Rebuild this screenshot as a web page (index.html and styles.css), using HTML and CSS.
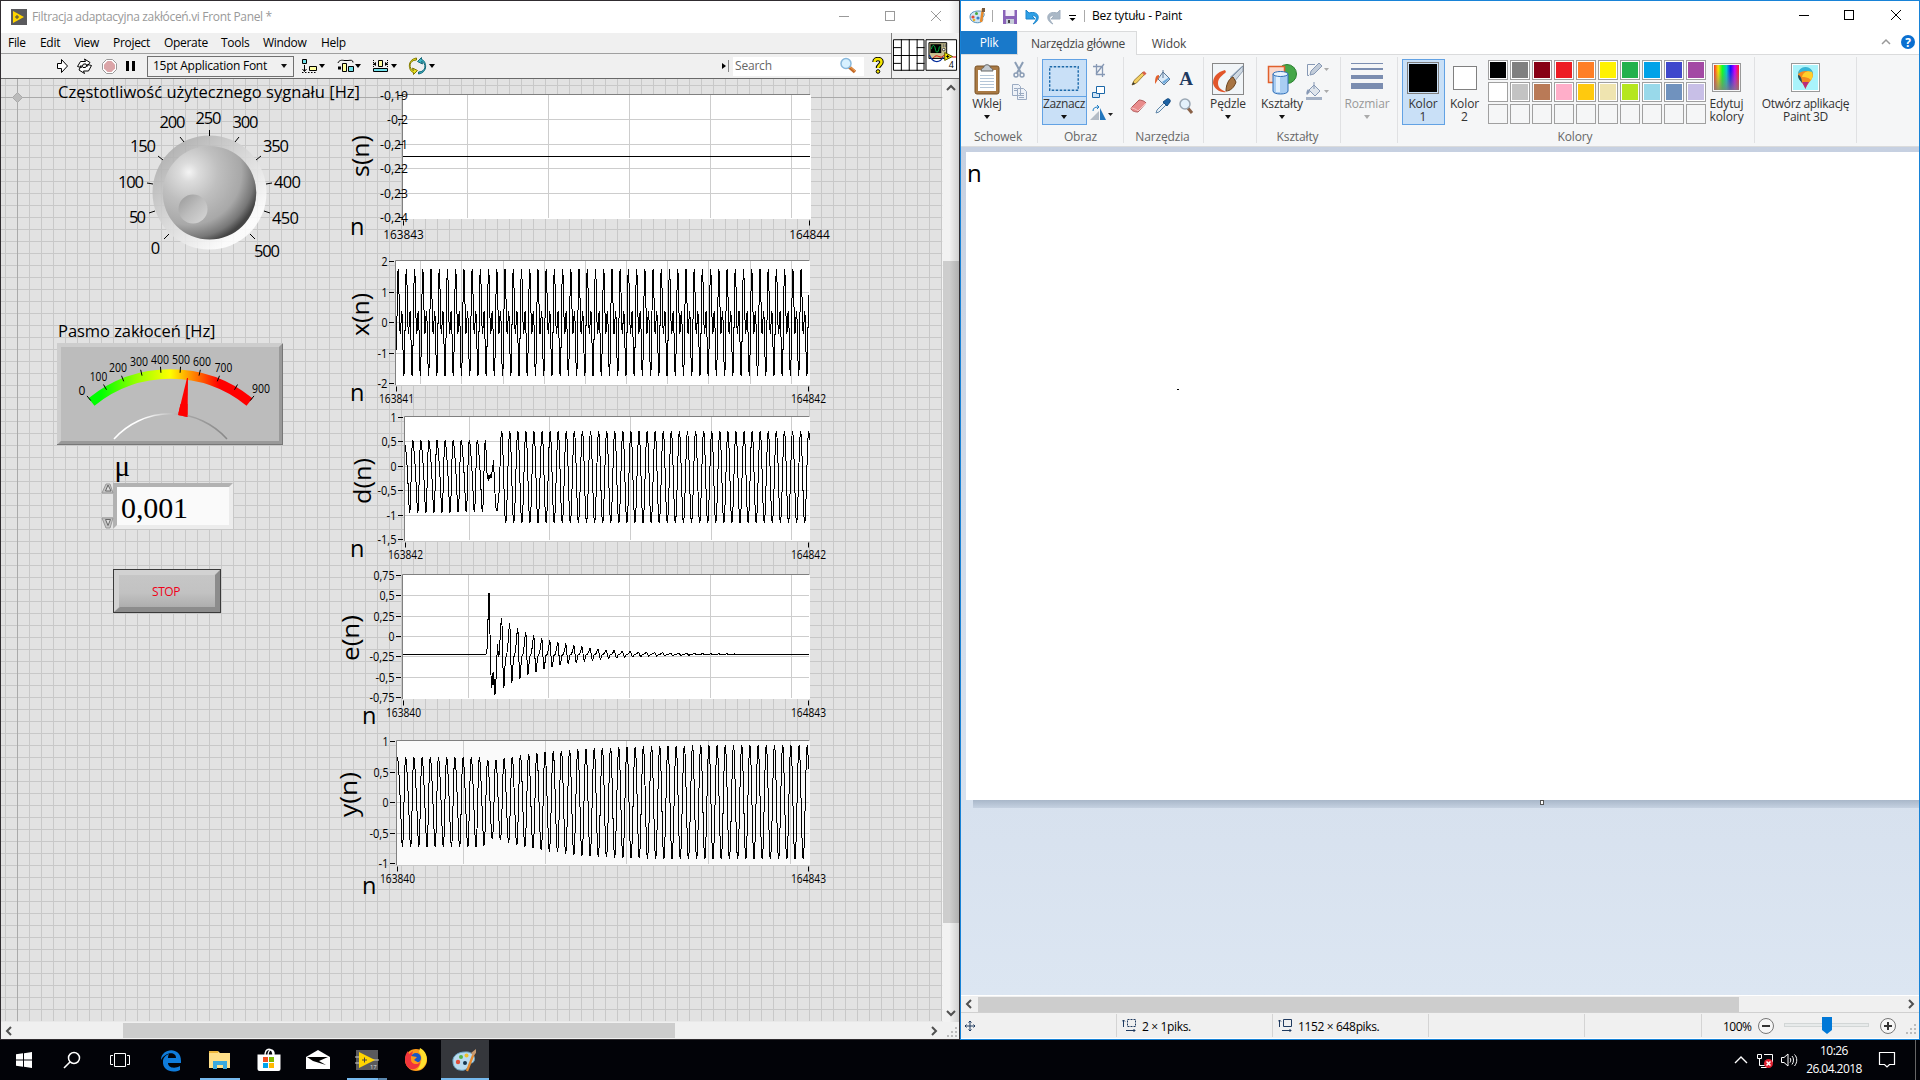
FILE: index.html
```html
<!DOCTYPE html>
<html lang="pl">
<head>
<meta charset="utf-8">
<title>Filtracja adaptacyjna zakłóceń</title>
<link rel="stylesheet" href="styles.css">
</head>
<body>
<div class="desktop">
<main class="windows">
<section class="labview">
  <header class="titlebar">
    <svg class="app-icon" width="16" height="16" viewBox="0 0 16 16"><rect width="16" height="16" fill="#5a5a5d"/><path d="M2 2v12l11-6z" fill="#ffd500"/><path d="M4 8h4M6 6v4" stroke="#444" stroke-width="1"/></svg>
    <span class="title">Filtracja adaptacyjna zakłóceń.vi Front Panel *</span>
    <div class="winbtns"><svg width="46" height="31"><path d="M18 15.500h10" /></svg><svg width="46" height="31"><rect x="18.500" y="10.500" width="9" height="9"/></svg><svg width="46" height="31"><path d="M18 10l10 10M28 10L18 20"/></svg></div>
  </header>
  <div class="bars">
    <div class="bars-main">
      <nav class="menubar"><span class="m1">File</span><span class="m2">Edit</span><span class="m3">View</span><span class="m4">Project</span><span class="m5">Operate</span><span class="m6">Tools</span><span class="m7">Window</span><span class="m8">Help</span></nav>
      <div class="toolbar">
        <svg class="tools-left" width="90" height="24" viewBox="52 54 90 24">
          <path d="M57.500 63.500h4v-4l6 6.500-6 6.500v-4h-4z" fill="#fff" stroke="#000"/>
          <path d="M77.500 66.500l3-5h5l-1-2.500 5.500 3.500-3 4-1-2.500h-2.500l-2 3.500zM91.500 65.500l-3 5.500h-5l1 2.500-5.500-3.500 2-4.500 2 2h2.500l2-3z" fill="#fff" stroke="#000"/>
          <path d="M106.500 59.500h6l4 4v6l-4 4h-6l-4-4v-6z" fill="#fff" stroke="#999"/><path d="M107.500 61h4l3.500 3.500v4l-3.500 3.500h-4l-3.500-3.500v-4z" fill="#dba5a8"/>
          <path d="M126 61h3v10h-3zM132 61h3v10h-3z"/>
        </svg>
        <div class="fontbox"><span>15pt Application Font</span><i class="caret"></i></div>
        <svg class="tools-mid" width="144" height="24" viewBox="296 54 144 24">
          <path d="M302.500 59.500h4v4h-4z" fill="#6fe0ea" stroke="#000"/><path d="M304.500 65v6M302.500 69l2 2.500 2-2.500" stroke="#000" fill="none"/><path d="M309.500 66.500h7v4h-7z" fill="#ffffa0" stroke="#000"/><path d="M302 72.500h15" stroke="#000" stroke-dasharray="1.500 1.500"/>
          <path d="M338 63c1-3 4-3 6-2.500h4c3-.5 5-.5 5 2" fill="none" stroke="#000"/><path d="M338 66.500h3v3h-3z"/><path d="M342.500 63.500h4v8h-4z" fill="#ffffa0" stroke="#000"/><path d="M348.500 66.500h5v5h-5z" fill="#6fe0ea" stroke="#000"/>
          <path d="M373.500 60v8M387.500 60v8" stroke="#000" stroke-dasharray="1 1"/><path d="M378.500 60.500h4v6h-4z" fill="#ffffa0" stroke="#000"/><path d="M373 64l3-2v4zM388 64l-3-2v4z"/><path d="M373.500 68.500h14v3h-14z" fill="#6fe0ea" stroke="#000"/>
          <path d="M416.500 60c-8 0-8 9-3 10.500l-1-2.500 5 2.500-4 4v-2c-5-1-7-13 3-14.500z" fill="#e8e020" stroke="#807800"/><path d="M418.500 72c8 0 8-9 3-10.500l1 2.500-5-2.500 4-4v2c5 1 7 13-3 14.500z" fill="#3db5c5" stroke="#146878"/>
          <path d="M319 64h6l-3 4zM355 64h6l-3 4zM391 64h6l-3 4zM429 64h6l-3 4z"/>
        </svg>
        <svg class="srch-mark" width="10" height="24"><path d="M1 9l4 3-4 3z"/><path d="M7.500 6v12" stroke="#888"/></svg>
        <div class="search"><span>Search</span>
          <svg width="20" height="18" viewBox="0 0 20 18"><path d="M10 9l7 6" stroke="#c46a28" stroke-width="3.500"/><path d="M11 9l6 5" stroke="#f3a553" stroke-width="1"/><circle cx="8" cy="6.500" r="5" fill="#d8f1ff" stroke="#88b8dc" stroke-width="1.500"/></svg>
        </div>
        <svg class="help" width="14" height="18" viewBox="0 0 14 18"><path d="M3.500 5c0-4 7-4 7 0 0 3-3.500 3-3.500 6" fill="none" stroke="#000" stroke-width="4.500"/><path d="M3.500 5c0-4 7-4 7 0 0 3-3.500 3-3.500 6" fill="none" stroke="#f5e700" stroke-width="2.500"/><circle cx="7" cy="14.500" r="1.800" fill="#f5e700" stroke="#000"/></svg>
      </div>
    </div>
    <svg class="pane-icons" width="68" height="45" viewBox="892 33 68 45">
      <path d="M893.500 39.500h31v31h-31zM901.500 39v32M909.500 39v32M917.500 39v32M893 55.500h32M893 47.500h8M893 63.500h8M917 47.500h8M917 63.500h8" fill="#fff" stroke="#000"/>
      <path d="M926.500 39.500h31v31h-31z" fill="#fff" stroke="#000"/>
      <path d="M929.500 42.500h18v16h-18z" fill="#c8c090" stroke="#000"/><path d="M931 44h11v9h-11z" fill="#000"/><path d="M932 49c1-5 3-5 4 0s3 4 4-2l1-1" stroke="#0b4" fill="none"/><path d="M944 44v3M946 44v3" stroke="#555"/><circle cx="944.500" cy="49.500" r="1.300" fill="#fff" stroke="#000" stroke-width=".7"/><path d="M930 55c3 8 10 9 14 2" stroke="#002a9a" fill="none" stroke-width="1.200"/><path d="M934 58c4-6 7 3 11-3h4M953 57h4" stroke="#e00000" fill="none"/><path d="M945.500 52.500v8l8-4z" fill="#f6e800" stroke="#550"/><path d="M947 56.500h3M948.500 55v3" stroke="#000"/>
      <text x="949.500" y="68" class="tiny8">4</text>
    </svg>
  </div>
  <div class="work">
    <svg id="panel" width="942" height="943" viewBox="1 79 942 943">
      <defs>
        <pattern id="grid" x="5" y="85" width="12" height="12" patternUnits="userSpaceOnUse"><path d="M0 0h12v1H0zM0 0h1v12H0z" fill="#c8c8c8"/></pattern>
        <radialGradient id="knob" cx=".28" cy=".28" r=".78"><stop offset="0" stop-color="#f4f4f4"/><stop offset=".13" stop-color="#dcdcdc"/><stop offset=".4" stop-color="#bfbfbf"/><stop offset=".72" stop-color="#a8a8a8"/><stop offset=".9" stop-color="#777"/><stop offset="1" stop-color="#444"/></radialGradient>
        <linearGradient id="ring" x1=".15" y1=".1" x2=".85" y2=".9"><stop offset="0" stop-color="#aaa"/><stop offset=".45" stop-color="#d6d6d6"/><stop offset=".62" stop-color="#e6e6e6"/><stop offset=".9" stop-color="#fff"/></linearGradient>
        <linearGradient id="dimple" x1="0" y1="0" x2="1" y2="1"><stop offset="0" stop-color="#989898"/><stop offset=".5" stop-color="#bdbdbd"/><stop offset="1" stop-color="#d8d8d8"/></linearGradient>
        <linearGradient id="heat" gradientUnits="userSpaceOnUse" x1="88" y1="0" x2="252" y2="0"><stop offset=".08" stop-color="#00ff00"/><stop offset=".28" stop-color="#8cff00"/><stop offset=".5" stop-color="#ffff00"/><stop offset=".63" stop-color="#ff9000"/><stop offset=".8" stop-color="#ff0000"/></linearGradient>
        <linearGradient id="arcg" gradientUnits="userSpaceOnUse" x1="114" y1="0" x2="227" y2="0"><stop offset=".25" stop-color="#fff"/><stop offset=".6" stop-color="#aaa"/><stop offset="1" stop-color="#888"/></linearGradient>
        <linearGradient id="btn" x1="0" y1="0" x2="0" y2="1"><stop offset="0" stop-color="#c6c6c6"/><stop offset=".55" stop-color="#c2c2c2"/><stop offset="1" stop-color="#aeaeae"/></linearGradient>
      </defs>
      <rect x="1" y="79" width="942" height="943" fill="#e2e2e2"/>
      <rect x="1" y="79" width="942" height="943" fill="url(#grid)"/>
      <path d="M1 97.500H943M17.500 79V1022" stroke="#aaa"/>
      <path d="M12.500 97.500l5-5 5 5-5 5z" fill="#bbb" stroke="#aaa"/>
      <path d="M942.500 79v943M1 1021.500h942" stroke="#fff" opacity=".6"/>

      <text class="s16" x="58" y="98" textLength="302">Częstotliwość użytecznego sygnału [Hz]</text>
      <circle cx="209.500" cy="192.500" r="57" fill="url(#ring)" opacity=".85"/>
      <circle cx="209.500" cy="192.800" r="46.800" fill="url(#knob)"/>
      <circle cx="193" cy="209" r="14.500" fill="url(#dimple)"/>
      <g id="knobTicks" stroke="#000"><path d="M209.500 130v6M180 137l4 5M158 156l5 4M147 183l6 1M149 213l6-2M164 239l5-5M239 137l-4 5M261 156l-5 4M272 183l-6 1M270 213l-6-2M255 239l-5-5"/></g>
      <g class="s16 mid">
        <text x="155.500" y="253.500">0</text><text x="137.500" y="223" textLength="17">50</text><text x="131" y="188" textLength="26">100</text><text x="143" y="152" textLength="26">150</text><text x="172.500" y="128" textLength="26">200</text><text x="208.500" y="124" textLength="26">250</text><text x="245.500" y="128" textLength="26">300</text><text x="276" y="152" textLength="26">350</text><text x="287.500" y="188" textLength="27">400</text><text x="285.500" y="224" textLength="27">450</text><text x="267" y="257" textLength="26">500</text>
      </g>

      <text class="s16" x="58" y="337" textLength="157.500">Pasmo zakłoceń [Hz]</text>
      <rect x="57" y="343" width="226" height="102" fill="#bcbcbc"/>
      <path d="M57 343h226l-4 4H61v94l-4 4z" fill="#cdcdcd"/><path d="M283 343v102H57l4-4h218v-94z" fill="#999"/><path d="M57 444.500h226M282.500 344v101" stroke="#777"/>
      <path d="M91.500 402A125.600 125.600 0 0 1 249.500 402" fill="none" stroke="url(#heat)" stroke-width="9.500"/>
      <g id="meterTicks" stroke="#000"></g>
      <g class="s12 mid">
        <text x="82" y="395">0</text><text x="98.500" y="380.500" textLength="17.500" lengthAdjust="spacingAndGlyphs">100</text><text x="118" y="371.500" textLength="18" lengthAdjust="spacingAndGlyphs">200</text><text x="139" y="365.500" textLength="18" lengthAdjust="spacingAndGlyphs">300</text><text x="160" y="363.500" textLength="18" lengthAdjust="spacingAndGlyphs">400</text><text x="181" y="363.500" textLength="18" lengthAdjust="spacingAndGlyphs">500</text><text x="202" y="365.500" textLength="18" lengthAdjust="spacingAndGlyphs">600</text><text x="223.500" y="371.500" textLength="17.500" lengthAdjust="spacingAndGlyphs">700</text><text x="261" y="392.500" textLength="18" lengthAdjust="spacingAndGlyphs">900</text>
      </g>
      <path d="M187 378h1l-.5 39-9.500-2z" fill="#f00"/>
      <path d="M114 439A76 76 0 0 1 227 439" fill="none" stroke="url(#arcg)" stroke-width="1.500"/>
      <path d="M178 415l9.500 2V404h-7z" fill="#f00"/>

      <text class="serif" x="114.500" y="476" font-size="29">μ</text>
      <path d="M113 483h120v46H113z" fill="#ececec"/><path d="M113 483h120l-4 4H117v38l-4 4z" fill="#b2b2b2"/><path d="M117 487h112v38H117z" fill="#fafafa"/>
      <text class="serif" x="121" y="518" font-size="30" textLength="67">0,001</text>
      <path d="M102 493l4-9h4l3 9z" fill="#c6c6c6" stroke="#999"/><path d="M105.500 491l2.500-6 3 6z" fill="#ddd" stroke="#666"/>
      <path d="M102 518h11l-3 10h-4z" fill="#c6c6c6" stroke="#999"/><path d="M105.500 519.500h5l-2.500 6z" fill="#ddd" stroke="#666"/>

      <rect x="113.500" y="569.500" width="107" height="43" fill="url(#btn)" stroke="#3a3a3a"/>
      <path d="M114 570h106l-6 5H120v31l-6 6z" fill="#d2d2d2"/><path d="M220 570v42H114l6-5h95v-32z" fill="#8c8c8c"/><path d="M119 575h96v32h-96z" fill="url(#btn)"/>
      <text class="s12 red" x="152" y="596" textLength="28.500">STOP</text>
    </svg>
    <div class="vscroll"><svg width="16" height="18"><path d="M4 11l4-4 4 4"/></svg><div class="vthumb"></div><svg width="16" height="18"><path d="M4 7l4 4 4-4"/></svg></div>
  </div>
  <div class="hscroll"><svg width="16" height="16"><path d="M10 4L6 8l4 4"/></svg><div class="hthumb"></div><svg class="hright" width="16" height="16"><path d="M6 4l4 4-4 4"/></svg><svg class="grip" width="16" height="16"><path d="M12 4h2v2h-2zM8 8h2v2H8zM12 8h2v2h-2zM4 12h2v2H4zM8 12h2v2H8zM12 12h2v2h-2z"/></svg></div>
</section>

<section class="paint">
  <header class="ptitle">
    <svg width="130" height="31" viewBox="961 0 130 31">
      <path d="M970 16c0-5 5-6 9-6 4 0 7 3 4 6-1 2 1 3-2 5-4 2-11 0-11-5z" fill="#cfe4f3" stroke="#5592bb"/><circle cx="973" cy="16" r="1.600" fill="#e04a3a"/><circle cx="976.500" cy="12.500" r="1.500" fill="#47a83d"/><circle cx="974" cy="19" r="1.300" fill="#efb020"/><circle cx="978" cy="17" r="1.600" fill="#3a7ec8"/><path d="M983 8l-2 13" stroke="#ea8b2a" stroke-width="2.500"/><path d="M983.500 7v4" stroke="#7a5a3a" stroke-width="3"/>
      <path d="M992.500 9v12M1084.500 9v12" stroke="#aaa"/>
      <path d="M1003 9h14v14h-14z" fill="#8a63b8"/><path d="M1005.500 9h9v6h-9z" fill="#f4f0f8"/><path d="M1006 18h8v5h-8z" fill="#c6cdd8"/><path d="M1008 19h2v3h-2z" fill="#444"/>
      <path d="M1026 9v9h9l-3-3c5-1 6 3 1 8 8-3 7-14-4-11z" fill="#2fa0e6" stroke="#1a84cc"/>
      <path d="M1060 9v9h-9l3-3c-5-1-6 3-1 8-8-3-7-14 4-11z" fill="#aab8c6" stroke="#a2b0c0"/>
      <path d="M1069 14.500h7" stroke="#000"/><path d="M1069.500 17h6l-3 3z"/>
    </svg>
    <span class="title">Bez tytułu - Paint</span>
    <div class="winbtns"><svg width="46" height="31"><path d="M18 14.500h10" /></svg><svg width="46" height="31"><rect x="17.500" y="9.500" width="9" height="9"/></svg><svg width="46" height="31"><path d="M18 9l10 10M28 9L18 19"/></svg></div>
  </header>
  <div class="tabs"><span class="tab file">Plik</span><span class="tab active">Narzędzia główne</span><span class="tab plain">Widok</span>
    <svg class="tabhelp" width="40" height="22"><path d="M3 13l4-4 4 4" fill="none" stroke="#999" stroke-width="1.500"/><circle cx="29" cy="11" r="7" fill="#0a6fd0"/><text x="29" y="15.500">?</text></svg></div>
  <div class="ribbon">
    <div class="rg g1">
      <div class="rbody">
        <div class="big"><svg width="26" height="32" viewBox="0 0 26 32"><rect x="1" y="3" width="24" height="28" rx="2" fill="#a97a45" stroke="#7a5326"/><path d="M4 7h18v21H4z" fill="#fff"/><path d="M6 12.500h14M6 15.500h14M6 18.500h14M6 21.500h14M6 24.500h14" stroke="#b5c6d8"/><path d="M7 8c0-3 3-3 3-4 0-3 6-3 6 0 0 1 3 1 3 4z" fill="#c4cad0" stroke="#666"/></svg><span>Wklej</span><i class="caret"></i></div>
        <div class="small"><svg width="18" height="22" viewBox="0 0 18 22"><path d="M5 3l6 11M13 3L7 14" stroke="#8b9db5" stroke-width="2"/><circle cx="6" cy="16" r="2" fill="none" stroke="#8b9db5" stroke-width="1.500"/><circle cx="12" cy="16" r="2" fill="none" stroke="#8b9db5" stroke-width="1.500"/></svg><svg width="18" height="22" viewBox="0 0 18 22"><path d="M2.500 3.500h6l2 2v9h-8zM7.500 7.500h6l3 3v8h-9z" fill="#eef2f8" stroke="#9babc2"/><path d="M9 12.500h5M9 14.500h5M9 16.500h5M4 7.500h3M4 9.500h3" stroke="#9babc2"/></svg></div>
      </div><div class="rl">Schowek</div>
    </div>
    <div class="rg g2">
      <div class="rbody">
        <div class="big sel"><div class="seltop"><svg width="30" height="25"><rect x=".7" y=".7" width="28.500" height="23.500"/></svg></div><span>Zaznacz</span><i class="caret"></i></div>
        <div class="small"><svg width="24" height="22" viewBox="0 0 24 22"><path d="M6.500 5v10.500H15M3 7.500h9.500V18M6 15L14 5" fill="none" stroke="#8698b4" stroke-width="1.300"/></svg><svg width="24" height="22" viewBox="0 0 24 22"><path d="M2.500 11.500h7v5h-7z" fill="#cfe4f6" stroke="#1c68a8"/><path d="M6.500 5.500h8v7h-8z" fill="#fff" stroke="#1c68a8"/></svg><svg width="24" height="22" viewBox="0 0 24 22"><path d="M0 17l9-9v9z" fill="#b4bcc6"/><path d="M10 17V5l6 12z" fill="#2176bd"/><path d="M3 8c0-3 2-4 5-4M7 2l2 2-2 2" stroke="#1c7cc4" fill="none"/><path d="M18 10h5l-2.500 3z" fill="#222"/></svg></div>
      </div><div class="rl">Obraz</div>
    </div>
    <div class="rg g3">
      <div class="rbody tools">
        <svg viewBox="0 0 18 18"><path d="M2 16l2-4.500 9-8.500 2 2-8.500 9z" fill="#f3cf62" stroke="#8a6a20" stroke-width=".8"/><path d="M2 16l1.200-3 2 2z" fill="#333"/><path d="M12 4l2-2 2.500 2.500-2 2z" fill="#d8604a"/></svg>
        <svg viewBox="0 0 18 18"><path d="M9 3l7 7-6 6-6-6z" fill="#dcebf8" stroke="#5a7796"/><path d="M9 1v8" stroke="#5a7796"/><path d="M5 6c-4 0-4 5-4 9l2-3 2-4z" fill="#e2602c"/><path d="M10 15l6-6-2 0-6 4z" fill="#6ca8da"/></svg>
        <svg viewBox="0 0 18 18"><text x="9" y="16" class="toolA">A</text></svg>
        <svg viewBox="0 0 18 18"><path d="M1 11L9 3c2 0 6 1 7 3l-8 9c-3 0-7-1-7-4z" fill="#e98c8c" stroke="#b05a5a"/><path d="M1 11c2 0 5 1 7 3l8-8" stroke="#f6c4c4" fill="none"/></svg>
        <svg viewBox="0 0 18 18"><path d="M2 16l1-3 7-7 2 2-7 7z" fill="#e8f1f8" stroke="#5f86a8"/><path d="M9 5l4-3c2-1 4 1 3 3l-3 4z" fill="#1d63a5" stroke="#134a80"/></svg>
        <svg viewBox="0 0 18 18"><path d="M10 10l5 6" stroke="#8a6248" stroke-width="3"/><circle cx="8" cy="7" r="5" fill="#e4f1fb" stroke="#9aa7b4" stroke-width="1.500"/></svg>
      </div><div class="rl">Narzędzia</div>
    </div>
    <div class="rg g4">
      <div class="rbody"><div class="big"><svg width="33" height="32" viewBox="0 0 33 32"><rect x=".5" y=".5" width="31" height="31" fill="#f1f5f8" stroke="#888"/><path d="M31 2L21 18l-3-4z" fill="#8fa3ba"/><path d="M31 8L22 19l-3-4L31 3z" fill="#cfd9e3" stroke="#61738a" stroke-width=".6"/><path d="M21 14l3 5c-2 6-6 9-10 9 0-5 2-12 7-14z" fill="#a87544" stroke="#6a431e"/><path d="M13 7C5 9 1 14 1 20c1 6 7 10 14 9-7-2-9-5-9-9 0-5 5-8 8-11z" fill="#e2562b"/></svg><span>Pędzle</span><i class="caret"></i></div></div>
    </div>
    <div class="rg g5">
      <div class="rbody">
        <div class="big"><svg width="30" height="30" viewBox="0 0 30 30"><circle cx="20" cy="10" r="9.500" fill="#45a648" stroke="#2a8130"/><path d="M1.500 2.500h16v16h-16z" fill="#fbd9cc" stroke="#e0602c" stroke-width="1.500"/><path d="M6 10v17c0 4 15 4 15 0V10z" fill="#a9cdf2" stroke="#2f6fb8"/><path d="M9 12h4v16H9z" fill="#e2f0fd"/><ellipse cx="13.500" cy="10" rx="7.500" ry="2.500" fill="#e8f3fd" stroke="#2f6fb8"/></svg><span>Kształty</span><i class="caret"></i></div>
        <div class="small"><svg width="26" height="22" viewBox="0 0 26 22"><path d="M10 5.500H2.500v11H4" fill="none" stroke="#8698b4"/><path d="M5 16l1-4 8-8 3 3-8 8z" fill="#c2ccd9" stroke="#8698b4"/><path d="M19 9h5l-2.500 3z" fill="#aaa"/></svg><svg width="26" height="22" viewBox="0 0 26 22"><path d="M9 4l6 6-5 5-6-6z" fill="#dfe5ec" stroke="#8698b4"/><path d="M9 1v7" stroke="#8698b4"/><path d="M3 8c-2 2-2 5-1 6l3-3z" fill="#8698b4"/><path d="M1 16h16v3H1z" fill="#a3b0c4"/><path d="M19 9h5l-2.500 3z" fill="#aaa"/></svg></div>
      </div><div class="rl">Kształty</div>
    </div>
    <div class="rg g6">
      <div class="rbody"><div class="big dim"><svg width="32" height="30"><path d="M0 1h32v1H0zM0 6h32v2H0zM0 13h32v4H0zM0 21h32v6H0z" fill="#7b8db0"/></svg><span>Rozmiar</span><i class="caret"></i></div></div>
    </div>
    <div class="rg g7">
      <div class="rbody">
        <div class="big col1"><div class="chip black"></div><span>Kolor<br>1</span></div>
        <div class="big col2"><div class="chip white"></div><span>Kolor<br>2</span></div>
        <div class="palette" id="palette"></div>
        <div class="big edit"><div class="tile rainbow"></div><span>Edytuj<br>kolory</span></div>
      </div><div class="rl">Kolory</div>
    </div>
    <div class="rg g8">
      <div class="rbody"><div class="big edit"><div class="tile"><svg width="25" height="25" viewBox="0 0 25 25"><rect width="25" height="25" fill="#a9f3fb"/><path d="M12.500 24C10 17 5 15 5 9.500a7.500 7 0 0 1 15 0C20 15 15 17 12.500 24z" fill="#f58a1f"/><path d="M5 9a7.500 7 0 0 1 15 0c-4-4-11-4-15 0z" fill="#35b6d8"/><path d="M9 12c1-5 6-7 10-5 1 3 1 5-1 8-3-3-6-3-9-3z" fill="#ffcf2a"/><path d="M5 10c2 0 4 3 4 8-2-3-4-4-4-8z" fill="#1c4a60"/><path d="M9 17l7 0c-2 3-3 5-3.500 7z" fill="#b82c7c"/></svg></div><span>Otwórz aplikację<br>Paint 3D</span></div></div>
    </div>
  </div>
  <div class="workspace">
    <div class="sheet"><span>n</span><i class="dot"></i></div>
    <div class="shade"><i class="handle"></i></div>
  </div>
  <div class="pscroll"><svg width="17" height="16"><path d="M10 4L6 8l4 4"/></svg><div class="pthumb"></div><svg class="hright" width="17" height="16"><path d="M7 4l4 4-4 4"/></svg></div>
  <footer class="status">
    <div class="cell c1"><svg width="12" height="12" viewBox="0 0 12 12"><path d="M6 1v10M1 6h10M4.500 2.500L6 1l1.500 1.500M4.500 9.500L6 11l1.500-1.500M2.500 4.500L1 6l1.500 1.500M9.500 4.500L11 6 9.500 7.500"/></svg></div>
    <div class="cell c2"><svg width="14" height="13" viewBox="0 0 14 13"><path d="M1.500 8V1M0 2.500L1.500 1 3 2.500M4 11.500h9M11.500 10l1.500 1.500-1.500 1.500"/><path d="M5.500.500h8v7h-8z" stroke-dasharray="2 1"/></svg><span>2 × 1piks.</span></div>
    <div class="cell c2"><svg width="14" height="13" viewBox="0 0 14 13"><path d="M1.500 8V1M0 2.500L1.500 1 3 2.500M4 11.500h9M11.500 10l1.500 1.500-1.500 1.500M5.500.500h8v7h-8z"/></svg><span>1152 × 648piks.</span></div>
    <div class="cell c2"></div><div class="cell c5"></div>
    <div class="zoom"><span>100%</span>
      <svg width="140" height="25" viewBox="1757 1014 140 25"><circle cx="1766" cy="1027" r="7.500" fill="#f6f6f6" stroke="#777"/><path d="M1762 1027h8" stroke="#333" stroke-width="2"/><rect x="1784.500" y="1024.500" width="84" height="3" fill="#e7eaea" stroke="#d2d6d6"/><path d="M1822 1018h10v13l-5 4-5-4z" fill="#0078d7"/><circle cx="1888" cy="1027" r="7.500" fill="#f6f6f6" stroke="#777"/><path d="M1884 1027h8M1888 1023v8" stroke="#333" stroke-width="2"/></svg>
      <svg class="grip" width="18" height="25"><path d="M13 11h2v2h-2zM9 15h2v2H9zM13 15h2v2h-2zM5 19h2v2H5zM9 19h2v2H9zM13 19h2v2h-2z"/></svg>
    </div>
  </footer>
</section>
</main>
<footer class="taskbar">
  <div class="tb"><svg viewBox="0 0 48 40"><path d="M16 14.300l7-1v6.200h-7zM24 13.200l8-1.200v7.500h-8zM16 20.500h7v6.200l-7-1zM24 20.500h8V28l-8-1.200z" fill="#fff"/></svg></div>
  <div class="tb"><svg viewBox="0 0 48 40"><circle cx="26" cy="18" r="5.500" fill="none" stroke="#fff" stroke-width="1.500"/><path d="M22 22l-6 6" stroke="#fff" stroke-width="1.600"/></svg></div>
  <div class="tb"><svg viewBox="0 0 48 40"><path d="M18.500 13.500h11v13h-11zM17 15.500h-2.500v9H17M31 15.500h2.500v9H31" fill="none" stroke="#fff"/></svg></div>
  <div class="tb first"><svg viewBox="0 0 48 40"><path d="M14 20C14 8 34 6 34 21v2H21c0 5 7 6 12 3v4c-8 4-18 0-17-9 0-3 3-6 6-7-1 2-1 3-1 4h8c0-7-11-6-15 2z" fill="#0f7cdb"/></svg></div>
  <div class="tb run"><svg viewBox="0 0 48 40"><path d="M13 11h9l2 2h10v15H13z" fill="#ffe08a"/><path d="M13 11h9v2h-9z" fill="#eeb83d"/><path d="M17 21h14v8h-4v-4h-6v4h-4z" fill="#3aa9e0"/></svg></div>
  <div class="tb"><svg viewBox="0 0 48 40"><path d="M20 16c0-9 8-9 8 0M23 16c0-9 7-7 6-1" fill="none" stroke="#fff" stroke-width="1.300"/><path d="M12.500 14.500h23V29a2 2 0 0 1-2 2h-19a2 2 0 0 1-2-2z" fill="#fff"/><path d="M18 17h5v5h-5z" fill="#f25022"/><path d="M24 17h5v5h-5z" fill="#7fba00"/><path d="M18 23h5v5h-5z" fill="#00a4ef"/><path d="M24 23h5v5h-5z" fill="#ffb900"/></svg></div>
  <div class="tb"><svg viewBox="0 0 48 40"><path d="M12 17l12-7 12 7v12H12z" fill="#fff"/><path d="M13 17h21l-9 4 7 4-13-4z" fill="#000"/></svg></div>
  <div class="tb run multi"><svg viewBox="0 0 48 40"><path d="M13 10h22v20H13z" fill="#5a5a5d"/><path d="M12 17h5M12 23h5M30 20h6" stroke="#ccc"/><path d="M16 12v16l16-8z" fill="#ffd500"/><path d="M19 20h5M21.500 17.500v5" stroke="#444"/><text x="27" y="29" class="tiny6">17</text></svg></div>
  <div class="tb"><svg viewBox="0 0 48 40"><circle cx="24" cy="20" r="11" fill="#ff9a18"/><path d="M13 19c0-3 1-6 3-8l1 3 4-3-1 4 4 2-5 3c1 5 7 5 9 2 0 5-5 8-9 7-4-1-6-5-6-10z" fill="#f2353c"/><circle cx="24" cy="18" r="5" fill="#1b57c4"/><path d="M19 16l6 1-3 3 5 3c-4 2-8 0-8-4z" fill="#ff9a18"/><path d="M28 8c6 3 8 9 6 15-2 4-5 7-9 7 5-6 6-14 2-18z" fill="#ffe02e"/></svg></div>
  <div class="tb run cur"><svg viewBox="0 0 48 40"><path d="M12 22c-1-6 5-10 12-10 7-1 11 5 9 9-1 3-4 1-5 4-1 4-5 6-9 5-4 0-7-4-7-8z" fill="#b9dbef" stroke="#6fa8c8"/><circle cx="17" cy="22" r="2.200" fill="#e0503c"/><circle cx="20" cy="17" r="2" fill="#53b248"/><circle cx="25.500" cy="15.500" r="2" fill="#efc02c"/><circle cx="24" cy="23" r="2" fill="#16354d"/><path d="M33 13l-7 18" stroke="#e48a30" stroke-width="2.300"/><path d="M30 13l5-4 0 4-3 3z" fill="#c79a70"/></svg></div>
  <div class="tray">
    <svg width="76" height="40" viewBox="1730 1040 76 40"><path d="M1735 1063l6-6 6 6" fill="none" stroke="#fff" stroke-width="1.400"/><path d="M1757.500 1054.500h4v4h-4zM1764 1054.500h8.500v8M1759.500 1059v6.500h6M1764 1063.500h3M1761 1067.500h6" fill="none" stroke="#fff"/><circle cx="1768.500" cy="1063.500" r="4.500" fill="#e02030"/><path d="M1766.500 1061.500l4 4M1770.500 1061.500l-4 4" stroke="#fff" stroke-width="1.500"/><path d="M1781.500 1057.500h2.500l4-3.500v12l-4-3.500h-2.500zM1790 1058c1 1 1 3 0 4.500M1792 1056c2 2 2 6 0 8.500M1794.500 1054.500c3 3 3 8 0 11.500" fill="none" stroke="#fff"/></svg>
    <div class="clock"><span>10:26</span><span>26.04.2018</span></div>
    <svg width="80" height="40" viewBox="1840 1040 80 40"><path d="M1879.500 1052.500h15v12h-5l-2.500 2.500-2.500-2.500h-5z" fill="none" stroke="#fff" stroke-width="1.200"/><path d="M1915.500 1040v40" stroke="#666"/></svg>
  </div>
</footer>
</div>
<script src="charts.js"></script>
</body>
</html>
```
FILE: styles.css
```css
* { box-sizing: border-box; }
body { margin: 0; background: #000; overflow: hidden; font: 12px/16px "Open Sans", "Noto Sans", sans-serif; letter-spacing: -0.3px; color: #000; }
svg { display: block; flex: none; }
i { font-style: normal; }
.desktop { width: 1920px; height: 1080px; display: flex; flex-direction: column; }
.windows { display: flex; height: 1040px; }
.labview { width: 960px; border: 1px solid #302c30; display: flex; flex-direction: column; background: #f0f0f0; }
.titlebar { height: 32px; background: linear-gradient(90deg, #fff 948px, #e4e4e4); display: flex; align-items: center; padding-left: 10px; color: #999; }
.titlebar .title { margin-left: 5px; letter-spacing: -0.33px; }
.winbtns { display: flex; margin-left: auto; align-self: flex-start; fill: none; stroke: #999; }
.bars { display: flex; height: 46px; border-bottom: 1px solid #696969; }
.bars-main { width: 890px; display: flex; flex-direction: column; }
.pane-icons { border-left: 1px solid #808080; }
.tiny8 { font: 9px "Open Sans", sans-serif; letter-spacing: 0; }
.tiny6 { font: 6px "Open Sans", sans-serif; fill: #ddd; }
.menubar { display: flex; height: 21px; align-items: center; border-bottom: 1px solid #a0a0a0; padding-left: 7px; }
.m1 { width: 32px; } .m2 { width: 34px; } .m3 { width: 39px; } .m4 { width: 51px; }
.m5 { width: 57px; } .m6 { width: 42px; } .m7 { width: 58px; }
.toolbar { height: 24px; display: flex; align-items: center; padding-left: 51px; }
.fontbox { margin-left: 5px; width: 147px; height: 21px; border: 1px solid #707070; display: flex; align-items: center; justify-content: space-between; padding: 0 6px 0 5px; letter-spacing: -0.25px; }
.caret { width: 0; height: 0; border: 3px solid transparent; border-top: 4px solid #111; border-bottom: 0; }
.tools-mid { margin-left: 2px; }
.srch-mark { margin-left: 281px; }
.search { margin-left: 2px; width: 131px; height: 19px; background: #fff; color: #666; display: flex; align-items: center; justify-content: space-between; padding: 0 6px 0 2px; letter-spacing: -0.2px; }
.help { margin-left: 7px; }
.work { display: flex; height: 943px; }
.s16 { font: 16.500px "Open Sans", "Noto Sans", sans-serif; letter-spacing: 0; }
.s12 { font: 12px "Open Sans", "Noto Sans", sans-serif; letter-spacing: 0; }
.s13 { font: 13px "Open Sans", "Noto Sans", sans-serif; letter-spacing: 0; }
.s24 { font: 23.500px "Open Sans", "Noto Sans", sans-serif; letter-spacing: 0; }
.serif { font-family: "Liberation Serif", serif; letter-spacing: 0; }
.red { fill: #f00018; }
.mid text, text.mid { text-anchor: middle; }
.end { text-anchor: end; }
.trace { fill: none; stroke: #000; stroke-width: 1; }
.vscroll { width: 16px; background: linear-gradient(90deg, #f2f2f2 40%, #d0d0d0); display: flex; flex-direction: column; }
.vscroll svg, .hscroll svg, .pscroll svg { fill: none; stroke: #505050; stroke-width: 2; }
.vthumb { height: 662px; margin: 164px 0 81px; background: linear-gradient(90deg, #cdcdcd 40%, #b0b0b0); }
.hscroll { height: 17px; display: flex; align-items: center; padding-left: 0; }
.hthumb { width: 552px; height: 15px; background: #cdcdcd; margin-left: 106px; }
.hright { margin-left: auto; }
.hscroll .grip, .grip { fill: #bbb; stroke: none; }
.hscroll .hright { margin-right: 1px; }

.paint { width: 960px; border: 1px solid #1883d7; display: flex; flex-direction: column; background: #fff; }
.ptitle { height: 30px; display: flex; }
.ptitle .title { line-height: 30px; letter-spacing: -0.23px; margin-left: 1px; }
.ptitle .winbtns { stroke: #000; }
.tabs { height: 24px; display: flex; border-bottom: 1px solid #dadbdc; color: #444; }
.tab { height: 24px; line-height: 25px; text-align: center; }
.file { width: 56px; height: 23px; background: #1979ca; color: #fff; line-height: 23px; }
.active { width: 120px; background: #f5f6f7; border: 1px solid #dadbdc; border-bottom: 0; letter-spacing: -0.3px; line-height: 23px; padding-left: 2px; }
.plain { width: 64px; letter-spacing: -0.1px; }
.tabhelp { margin-left: auto; margin-right: 0; }
.tabhelp text { font: bold 12px "Open Sans", sans-serif; fill: #fff; text-anchor: middle; letter-spacing: 0; }
.ribbon { height: 92px; background: #f5f6f7; border-bottom: 1px solid #dadbdc; display: flex; padding: 2px 0 3px; color: #444; }
.rg { border-right: 1px solid #e0e1e3; display: flex; flex-direction: column; }
.rbody { height: 73px; display: flex; padding: 2px 0 0 4px; }
.rl { height: 13px; line-height: 14px; text-align: center; color: #666; letter-spacing: -0.15px; }
.g1 { width: 77px; } .g2 { width: 86px; } .g3 { width: 80px; } .g4 { width: 53px; }
.g5 { width: 84px; } .g6 { width: 57px; } .g7 { width: 357px; } .g8 { width: 102px; }
.g1 .rl, .g3 .rl, .g5 .rl, .g7 .rl { padding-right: 2px; }
.big { width: 45px; height: 66px; display: flex; flex-direction: column; align-items: center; padding: 3px 1px 0 0; white-space: nowrap; letter-spacing: -0.15px; }
.big > svg { height: 34px; overflow: visible; }
.big span { line-height: 13px; margin-top: 1px; text-align: center; color: #333; }
.big .caret { margin-top: 5px; }
.dim span { color: #999; } .dim .caret { border-top-color: #aaa; }
.sel { border: 1px solid #62a2e4; background: #c9e0f7; padding: 0 1px 0 0; letter-spacing: -0.4px; }
.seltop { width: 43px; height: 37px; border-bottom: 1px solid #62a2e4; display: flex; align-items: center; justify-content: center; }
.seltop rect { fill: none; stroke: #1c68a8; stroke-width: 1.400; stroke-dasharray: 2.500 1.500; }
.sel span { margin-top: 0; }
.small { display: flex; flex-direction: column; }
.g2 .small { padding-left: 3px; } .g1 .small { padding-left: 0; }
.g4 .rbody { padding-left: 2px; }
.g5 .rbody { padding-left: 3px; } .g5 .small { padding-left: 0; }
.g6 .rbody { padding-left: 4px; }
.g3 .tools { display: grid; grid-template-columns: repeat(3, 18px); grid-template-rows: 18px 18px; gap: 10px 5.500px; padding: 12px 0 0 6px; }
.toolA { font: bold 19px "Liberation Serif", serif; text-anchor: middle; fill: #1f3a5f; letter-spacing: 0; }
.g7 .big { letter-spacing: -0.1px; }
.g7 .rbody .col1 { border: 1px solid #62a2e4; background: #c9e0f7; width: 43px; padding-top: 2px; }
.g7 .rbody { padding-left: 4px; }
.chip { border: 1px solid #808080; box-shadow: inset 0 0 0 2px #fff; flex: none; }
.black { width: 32px; height: 32px; background: #000; box-shadow: inset 0 0 0 1px #c9e0f7; margin-bottom: 2px; }
.white { width: 24px; height: 24px; background: #fff; margin: 4px 0 6px; }
.col2 { width: 40px; }
.palette { display: grid; grid-template-columns: repeat(10, 20px); grid-auto-rows: 20px; gap: 2px; margin: 1px 0 0 3px; }
.palette b { border: 1px solid #a0a0a0; box-shadow: inset 0 0 0 1px #fff; }
.palette b.none { box-shadow: none; }
.g7 .edit { width: 42px; }
.tile { width: 29px; height: 29px; border: 1px solid #999; padding: 1px; background: #fff; margin: 1px 0 4px; flex: none; }
.rainbow { background: linear-gradient(#0000 20%, #808080cc) content-box, linear-gradient(90deg, #e33, #fd0, #1f2, #0cc, #11f, #c0f, #f22) content-box; }
.g8 .edit { width: 94px; letter-spacing: -0.3px; }
.workspace { height: 848px; background: linear-gradient(#c6d0e1, #dce6f2); padding: 5px 0 0 5px; }
.sheet { width: 953px; height: 648px; background: #fff; position: relative; padding: 5px 0 0 1px; font-size: 24px; line-height: 32px; }
.dot { position: absolute; left: 211px; top: 237px; width: 2px; height: 1px; background: #000; }
.shade { height: 8px; margin-left: 7px; background: linear-gradient(#a9b7c9, #c5d1e1); }
.handle { display: block; margin-left: 567px; width: 4px; height: 5px; border: 1px solid #555; background: #fff; }
.pscroll { height: 17px; background: #f0f0f0; border-top: 1px solid #fff; display: flex; align-items: center; }
.pthumb { width: 761px; flex: none; height: 15px; background: #cdcdcd; }
.status { height: 26px; background: #f0f0f0; border-top: 1px solid #d0d0d0; display: flex; letter-spacing: -0.35px; }
.cell { height: 23px; margin-top: 1px; border-right: 1px solid #d4d4d4; display: flex; align-items: center; gap: 6px; }
.cell span, .zoom span { padding-top: 2px; }
.cell svg { fill: none; stroke: #1f3a5f; }
.c1 { width: 156px; padding-left: 3px; } .c2 { width: 156px; padding-left: 5px; } .c5 { width: 117px; }
.zoom { display: flex; flex: 1; align-items: center; padding-left: 21px; letter-spacing: -0.5px; }
.zoom span { width: 34px; }
.zoom .grip { margin-left: auto; }

.taskbar { height: 40px; background: #020308; display: flex; color: #fff; }
.tb { width: 48px; height: 40px; margin-right: 1px; }
.tb svg { width: 48px; height: 40px; }
.tb:nth-child(-n+2) { margin-right: 0; }
.first { margin-left: 2px; }
.run { background: linear-gradient(#76b9ed, #76b9ed) 4px 38px / 40px 2px no-repeat; }
.multi { background: linear-gradient(90deg, #76b9ed 31px, #35506a 31px, #5a87ad 32px) 4px 38px / 40px 2px no-repeat; }
.cur { background: linear-gradient(#76b9ed, #76b9ed) 0 38px / 48px 2px no-repeat #35373c; }
.tray { width: 190px; margin-left: auto; display: flex; }
.clock { width: 70px; margin: 0 -29px 0 -7px; padding: 2px 0; display: flex; flex-direction: column; align-items: center; line-height: 18px; letter-spacing: -0.55px; }
```
FILE: charts.js
```js
const NS = 'http://www.w3.org/2000/svg';
const panel = document.getElementById('panel');

function add(tag, attrs, text, parent = panel) {
  const el = document.createElementNS(NS, tag);
  for (const k in attrs) el.setAttribute(k, attrs[k]);
  if (text !== undefined) el.textContent = text;
  parent.appendChild(el);
  return el;
}

// Meter scale: nine divisions over the arc
const ticks = document.getElementById('meterTicks');
for (let i = 0; i < 10; i++) {
  const a = (-38.9 + i * 8.645) * Math.PI / 180;
  const s = Math.sin(a), c = Math.cos(a);
  add('path', { d: `M${170.5 + 127 * s} ${499.4 - 127 * c}L${170.5 + 133 * s} ${499.4 - 133 * c}` }, undefined, ticks);
}

function interp(points, x) {
  for (let i = 1; i < points.length; i++) {
    if (x <= points[i][0]) {
      const [x0, y0] = points[i - 1], [x1, y1] = points[i];
      return y0 + (y1 - y0) * (x - x0) / (x1 - x0);
    }
  }
  return points[points.length - 1][1];
}

function drawChart(c) {
  const w = c.right - c.left;
  add('rect', { x: c.left, y: c.top, width: w, height: c.bottom - c.top, fill: c.bg || '#fff' });
  let g = '';
  c.rows.forEach((y, i) => { if (i && i < c.rows.length - 1) g += `M${c.left} ${y + .5}H${c.right - 1}`; });
  c.cols.forEach(x => { g += `M${x + .5} ${c.top}V${c.bottom - 1}`; });
  add('path', { d: g, stroke: '#cdcdcd' });
  add('path', { d: `M${c.left - .5} ${c.bottom}V${c.top - .5}H${c.right - 1}`, stroke: '#808080', fill: 'none' });
  let t = '';
  c.rows.forEach((y, i) => {
    t += `M${c.tick} ${y + .5}h5`;
    add('text', { class: (c.font || 's12') + ' end', x: c.labelX, y: y + 5, textLength: c.widths[i], lengthAdjust: 'spacingAndGlyphs' }, c.labels[i]);
  });
  t += `M${c.left + .5} ${c.bottom + 1.5}v5M${c.right - 1.5} ${c.bottom + 1.5}v5`;
  add('path', { d: t, stroke: '#000' });
  const lw = c.font ? 40.5 : 35;
  [[c.left + .5, c.from], [c.right - 1.5, c.to]].forEach(([x, s]) => {
    add('text', { class: (c.font || 's12') + ' mid', x, y: c.base, textLength: lw, lengthAdjust: 'spacingAndGlyphs' }, s);
  });
  add('text', { class: 's24', x: c.nx, y: c.ny }, 'n');
  add('text', { class: 's24', transform: `translate(${c.vx} ${c.vy}) rotate(-90)`, textLength: c.vl, lengthAdjust: 'spacingAndGlyphs' }, c.name);
  add('polyline', { class: 'trace', 'shape-rendering': 'crispEdges', points: c.points.map(p => p[0].toFixed(2) + ',' + p[1].toFixed(2)).join(' ') });
}

const TAU = 2 * Math.PI;

// x(n): fundamental plus second harmonic, 20 samples per period
const xs = [];
for (let i = 0; i <= 1002; i++) {
  const t = TAU * (i - 1) / 20;
  xs.push([396.5 + i * 412 / 1002, 322.5 - 30.6 * (Math.sin(t) + Math.sin(2 * t))]);
}

// d(n): disturbed sine with a change of amplitude around sample 200
const ds = [];
for (let i = 0; i <= 198; i++) {
  const t = TAU * (i - 18) / 20;
  ds.push([405.5 + i * .404, 476.3 - 36 * Math.cos(t - .44 * (1 - Math.cos(t)))]);
}
[[437, 606], [439, 655], [441, 700], [443, 715], [445, 718], [447, 704], [449, 712], [451, 706], [453, 715], [455, 710], [457, 682], [459, 675], [460, 660], [461, 690], [463, 700], [465, 760], [468, 805], [471, 812], [473, 800], [476, 765], [479, 750], [480, 680], [482, 600]]
  .forEach(([x, y]) => ds.push([340 + x / 3, 240 + y / 3]));
for (let i = 238; i <= 1000; i++) {
  ds.push([405.5 + i * .404, 477 - 45.6 * Math.cos(TAU * (i - 238) / 20)]);
}

// e(n): adaptation error, decaying after the step
const es = [[189, 283], [438, 283], [442, 262], [446, 100], [448, 100], [450, 222], [454, 385], [457, 340], [459, 375], [461, 335], [464, 402], [467, 400], [469, 318], [473, 252], [475, 292], [478, 280], [480, 240]];
const shape = [[0, 1], [2, .8], [4, -.1], [7, -.92], [9, -.8], [12, -.1], [16, -.03], [19, .2], [21, .4]];
for (let k = 0; k < 38; k++) {
  const a = 109 * Math.pow(.853, k);
  shape.forEach(([dx, v]) => es.push([484 + 24.15 * k + dx, 283 - a * v]));
}
es.push([1406, 283]);

// y(n): filter output between its upper and lower envelope
const upper = [[0, .74], [245, .74], [268, .7], [294, .7], [320, .72], [369, .78], [418, .81], [470, .84], [542, .87], [640, .9], [738, .92], [934, .94], [1240, .94]];
const lower = [[0, .73], [240, .73], [262, .7], [285, .6], [310, .62], [359, .7], [431, .78], [480, .82], [528, .86], [603, .89], [680, .91], [780, .92], [1240, .93]];
const ys = [];
for (let i = 0; i <= 1003; i++) {
  const px = i * 1233 / 1003;
  const t = TAU * i / 20;
  const v = Math.cos(t - Math.max(0, .4 - px / 1500) * (1 - Math.cos(t)));
  ys.push([397.5 + px / 3, 802.5 - 61 * v * interp(v > 0 ? upper : lower, px)]);
}

[
  { name: 's(n)', left: 403, right: 811, top: 95, bottom: 219, rows: [95, 119, 144, 168, 193, 217], cols: [467, 548, 629, 710, 791], tick: 398, labelX: 408, labels: ['-0,19', '-0,2', '-0,21', '-0,22', '-0,23', '-0,24'], widths: [28, 21, 28, 28, 28, 28], font: 's13', from: '163843', to: '164844', base: 239, nx: 350, ny: 235, vx: 369, vy: 177, vl: 42, points: [[403, 156.5], [810, 156.5]] },
  { name: 'x(n)', left: 396, right: 810, top: 261, bottom: 385, rows: [261, 292, 322, 353, 383], cols: [420, 461, 503, 544, 585, 626, 667, 708, 750, 791], tick: 389, labelX: 387.5, labels: ['2', '1', '0', '-1', '-2'], widths: [6, 6, 6, 10, 10], from: '163841', to: '164842', base: 403, nx: 350, ny: 401, vx: 369, vy: 336, vl: 43, points: xs },
  { name: 'd(n)', left: 405, right: 810, top: 417, bottom: 541, rows: [417, 441, 466, 490, 515, 539], cols: [469, 549, 630, 711, 791], tick: 398, labelX: 396.5, labels: ['1', '0,5', '0', '-0,5', '-1', '-1,5'], widths: [6, 15, 6, 19, 10, 19], from: '163842', to: '164842', base: 559, nx: 350, ny: 557, vx: 371, vy: 504, vl: 46, points: ds },
  { name: 'e(n)', left: 403, right: 810, top: 575, bottom: 699, rows: [575, 595, 616, 636, 656, 677, 697], cols: [468, 548, 629, 710, 791], tick: 396, labelX: 394.5, labels: ['0,75', '0,5', '0,25', '0', '-0,25', '-0,5', '-0,75'], widths: [21, 15, 21, 6, 25, 19, 25], from: '163840', to: '164843', base: 717, nx: 362, ny: 724, vx: 359, vy: 661, vl: 46, points: es.map(([x, y]) => [340 + x / 3, 560 + y / 3]) },
  { name: 'y(n)', left: 397, right: 810, top: 741, bottom: 865, bg: '#fafafa', rows: [741, 772, 802, 833, 863], cols: [463, 545, 626, 708, 790], tick: 390, labelX: 388.5, labels: ['1', '0,5', '0', '-0,5', '-1'], widths: [6, 15, 6, 19, 10], from: '163840', to: '164843', base: 883, nx: 362, ny: 894, vx: 357, vy: 817, vl: 45, points: ys }
].forEach(drawChart);

// Colour palette: the last row holds empty custom slots
const colors = ['#000', '#7f7f7f', '#880015', '#ed1c24', '#ff7f27', '#fff200', '#22b14c', '#00a2e8', '#3f48cc', '#a349a4', '#fff', '#c3c3c3', '#b97a57', '#ffaec9', '#ffc90e', '#efe4b0', '#b5e61d', '#99d9ea', '#7092be', '#c8bfe7'];
const palette = document.getElementById('palette');
for (let i = 0; i < 30; i++) {
  const b = document.createElement('b');
  if (colors[i]) b.style.background = colors[i]; else b.className = 'none';
  palette.appendChild(b);
}
```
